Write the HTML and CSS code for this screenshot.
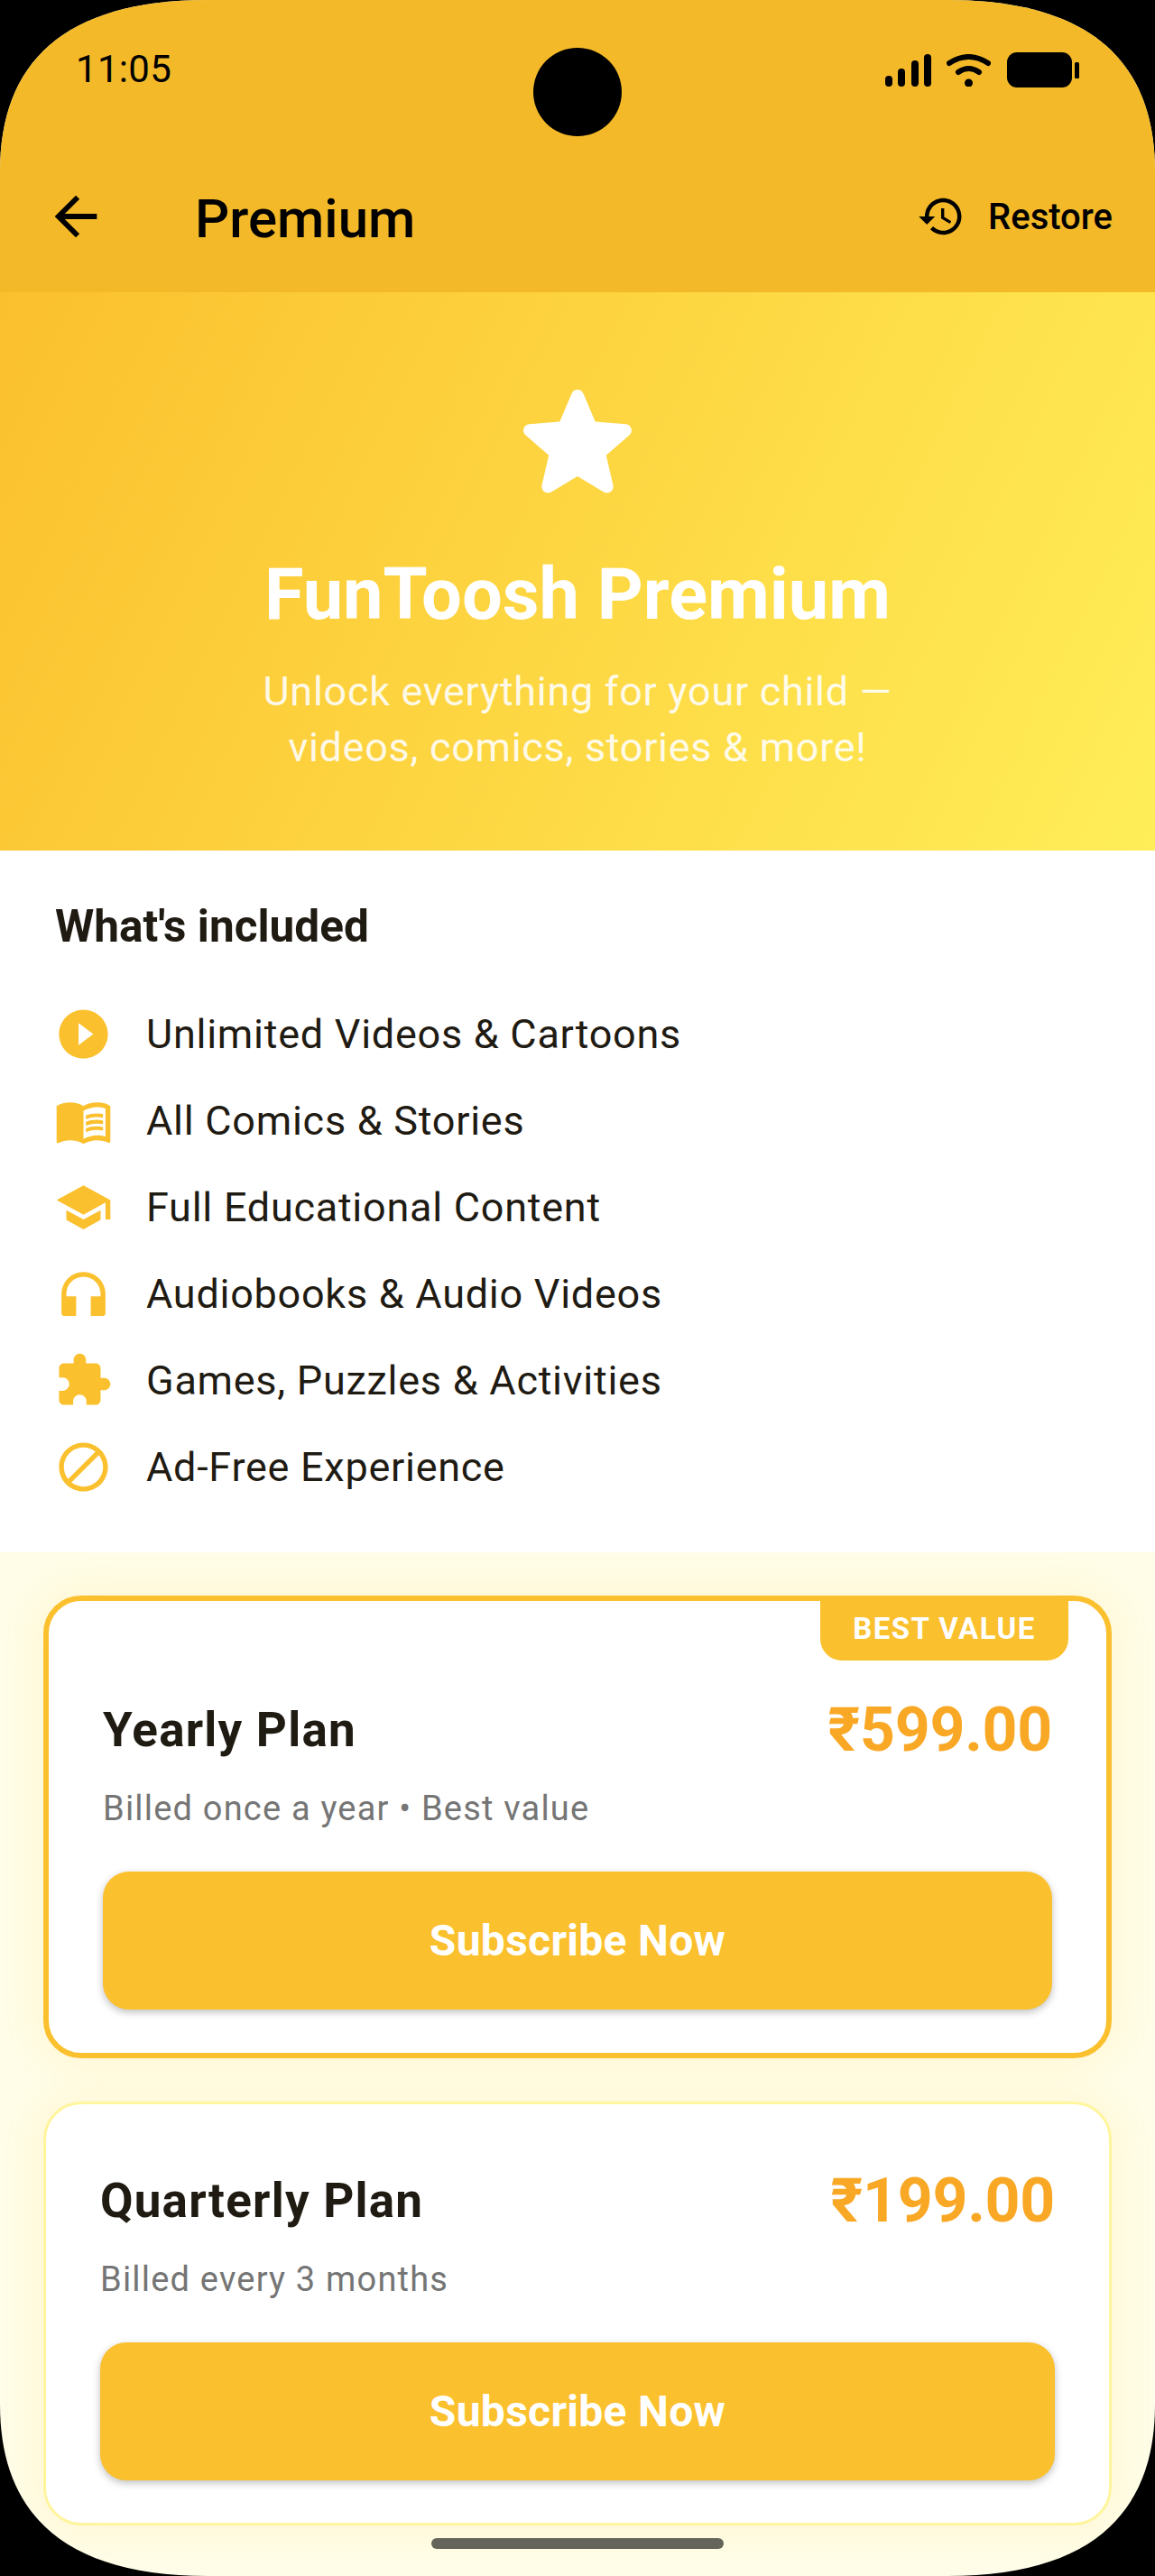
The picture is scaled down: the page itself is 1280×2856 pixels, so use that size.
FILE: index.html
```html
<!DOCTYPE html>
<html lang="en">
<head>
    <meta charset="UTF-8">
    <meta name="viewport" content="width=device-width, initial-scale=1.0">
    <title>FunToosh Premium</title>
    <link rel="stylesheet" href="styles.css">
</head>
<body>
    <div class="screen">
        <!-- Status bar and toolbar -->
        <header class="app-bar">
            <div class="status-bar">
                <span class="status-time">11:05</span>
                <div class="status-icons">
                    <svg class="icon-signal" viewBox="0 0 51 36">
                        <rect x="0" y="24" width="8" height="12" rx="4"/>
                        <rect x="14" y="16" width="8" height="20" rx="4"/>
                        <rect x="29" y="7" width="8" height="29" rx="4"/>
                        <rect x="43" y="0" width="8" height="36" rx="4"/>
                    </svg>
                    <svg class="icon-wifi" viewBox="0 0 49 36">
                        <path d="M3 10Q24.5 -4 46 10M13 20Q24.5 12 36 20" fill="none" stroke="#000" stroke-width="6" stroke-linecap="round"/>
                        <circle cx="24.5" cy="32" r="4.5"/>
                    </svg>
                    <svg class="icon-battery" viewBox="0 0 80 39">
                        <rect x="0" y="0" width="72" height="39" rx="11"/>
                        <rect x="75" y="11" width="5" height="18" rx="1.5"/>
                    </svg>
                </div>
            </div>
            <div class="toolbar">
                <svg class="icon-back" viewBox="0 0 24 24"><path d="M20 11H7.83l5.59-5.59L12 4l-8 8 8 8 1.41-1.41L7.83 13H20v-2z"/></svg>
                <h1 class="toolbar-title">Premium</h1>
                <div class="restore">
                    <svg class="icon-restore" viewBox="0 0 24 24"><path d="M13 3c-4.97 0-9 4.03-9 9H1l3.89 3.89.07.14L9 12H6c0-3.87 3.13-7 7-7s7 3.13 7 7-3.13 7-7 7c-1.93 0-3.68-.79-4.94-2.06l-1.42 1.42C8.27 19.99 10.51 21 13 21c4.97 0 9-4.03 9-9s-4.03-9-9-9zm-1 5v5l4.28 2.54.72-1.21-3.5-2.08V8H12z"/></svg>
                    <span>Restore</span>
                </div>
            </div>
        </header>

        <!-- Hero -->
        <section class="hero">
            <svg class="hero-star" viewBox="0 0 24 24"><path d="M12 17.27l4.15 2.51c.76.46 1.69-.22 1.49-1.08l-1.1-4.72 3.67-3.18c.67-.58.31-1.68-.57-1.75l-4.83-.41-1.89-4.46c-.34-.81-1.5-.81-1.84 0L9.19 8.63l-4.83.41c-.88.07-1.24 1.17-.57 1.75l3.67 3.18-1.1 4.72c-.2.86.73 1.54 1.49 1.08l4.15-2.5z"/></svg>
            <h2 class="hero-title">FunToosh Premium</h2>
            <p class="hero-text">Unlock everything for your child —<br>videos, comics, stories &amp; more!</p>
        </section>

        <!-- Features -->
        <section class="included">
            <h3 class="included-title">What's included</h3>
            <ul class="feature-list">
                <li class="feature">
                    <svg class="feature-icon" viewBox="0 0 24 24"><path d="M12 2C6.48 2 2 6.48 2 12s4.48 10 10 10 10-4.48 10-10S17.52 2 12 2zm-2 14.5v-9l6 4.5-6 4.5z"/></svg>
                    <span>Unlimited Videos &amp; Cartoons</span>
                </li>
                <li class="feature">
                    <svg class="feature-icon" viewBox="0 0 24 24"><path d="M21 5c-1.11-.35-2.33-.5-3.5-.5-1.95 0-4.05.4-5.5 1.5-1.45-1.1-3.55-1.5-5.5-1.5S2.45 4.9 1 6v14.65c0 .25.25.5.5.5.1 0 .15-.05.25-.05C3.1 20.45 5.05 20 6.5 20c1.95 0 4.05.4 5.5 1.5 1.35-.85 3.8-1.5 5.5-1.5 1.65 0 3.35.3 4.75 1.05.1.05.15.05.25.05.25 0 .5-.25.5-.5V6c-.6-.45-1.25-.75-2-1zm0 13.5c-1.1-.35-2.3-.5-3.5-.5-1.7 0-4.15.65-5.5 1.5V8c1.35-.85 3.8-1.5 5.5-1.5 1.2 0 2.4.15 3.5.5v11.5z"/><path d="M17.5 10.5c.88 0 1.73.09 2.5.26V9.24c-.79-.15-1.64-.24-2.5-.24-1.7 0-3.24.29-4.5.83v1.66c1.13-.64 2.7-.99 4.5-.99zM13 12.49v1.66c1.13-.64 2.7-.99 4.5-.99.88 0 1.73.09 2.5.26V11.9c-.79-.15-1.64-.24-2.5-.24-1.7 0-3.24.3-4.5.83zM17.5 14.33c-1.7 0-3.24.29-4.5.83v1.66c1.13-.64 2.7-.99 4.5-.99.88 0 1.73.09 2.5.26v-1.52c-.79-.16-1.64-.24-2.5-.24z"/></svg>
                    <span>All Comics &amp; Stories</span>
                </li>
                <li class="feature">
                    <svg class="feature-icon" viewBox="0 0 24 24"><path d="M5 13.18v4L12 21l7-3.82v-4L12 17l-7-3.82zM12 3L1 9l11 6 9-4.91V17h2V9L12 3z"/></svg>
                    <span>Full Educational Content</span>
                </li>
                <li class="feature">
                    <svg class="feature-icon" viewBox="0 0 24 24"><path d="M12 3a9 9 0 0 0-9 9v8c0 .55.45 1 1 1h5v-8H5v-1c0-3.87 3.13-7 7-7s7 3.13 7 7v1h-4v8h5c.55 0 1-.45 1-1v-8a9 9 0 0 0-9-9z"/></svg>
                    <span>Audiobooks &amp; Audio Videos</span>
                </li>
                <li class="feature">
                    <svg class="feature-icon" viewBox="0 0 24 24"><path d="M20.5 11H19V7c0-1.1-.9-2-2-2h-4V3.5C13 2.12 11.88 1 10.5 1S8 2.12 8 3.5V5H4c-1.1 0-1.99.9-1.99 2v3.8H3.5c1.49 0 2.7 1.21 2.7 2.7s-1.21 2.7-2.7 2.7H2V20c0 1.1.9 2 2 2h3.8v-1.5c0-1.49 1.21-2.7 2.7-2.7 1.49 0 2.7 1.21 2.7 2.7V22H17c1.1 0 2-.9 2-2v-4h1.5c1.38 0 2.5-1.12 2.5-2.5S21.88 11 20.5 11z"/></svg>
                    <span>Games, Puzzles &amp; Activities</span>
                </li>
                <li class="feature">
                    <svg class="feature-icon" viewBox="0 0 24 24"><path d="M12 2C6.48 2 2 6.48 2 12s4.48 10 10 10 10-4.48 10-10S17.52 2 12 2zM4 12c0-4.42 3.58-8 8-8 1.85 0 3.55.63 4.9 1.69L5.69 16.9C4.63 15.55 4 13.85 4 12zm8 8c-1.85 0-3.55-.63-4.9-1.69L18.31 7.1C19.37 8.45 20 10.15 20 12c0 4.42-3.58 8-8 8z"/></svg>
                    <span>Ad-Free Experience</span>
                </li>
            </ul>
        </section>

        <!-- Plans -->
        <section class="plans">
            <div class="plan plan-best">
                <span class="plan-badge">BEST VALUE</span>
                <div class="plan-head">
                    <span class="plan-name">Yearly Plan</span>
                    <span class="plan-price">₹599.00</span>
                </div>
                <p class="plan-note">Billed once a year • Best value</p>
                <button class="plan-btn">Subscribe Now</button>
            </div>
            <div class="plan plan-plain">
                <div class="plan-head">
                    <span class="plan-name">Quarterly Plan</span>
                    <span class="plan-price">₹199.00</span>
                </div>
                <p class="plan-note">Billed every 3 months</p>
                <button class="plan-btn">Subscribe Now</button>
            </div>
        </section>

        <!-- Over the content -->
        <div class="camera"></div>
        <div class="home-bar"></div>
    </div>
</body>
</html>
```

FILE: styles.css
```css
* {
    box-sizing: border-box;
}

body {
    margin: 0;
    background: #000;
    font-family: Roboto, "Liberation Sans", sans-serif;
    color: #1f1b13;
}

h1, h2, h3, p, ul {
    margin: 0;
    padding: 0;
}

.screen {
    position: relative;
    width: 1280px;
    height: 2856px;
    overflow: hidden;
    background: #fffde7;
    clip-path: path("M0 190C0 70 70 0 230 0H1050C1210 0 1280 70 1280 190V2666C1280 2786 1210 2856 1050 2856H230C70 2856 0 2786 0 2666Z");
}

/* App bar */
.app-bar {
    height: 324px;
    background: #f3b928;
    color: #000;
}

.status-bar {
    height: 156px;
    display: flex;
    justify-content: space-between;
    padding: 54px 84px 0 84px;
}

.status-time {
    font-size: 42px;
    line-height: 46px;
    letter-spacing: 0.3px;
}

.status-icons {
    display: flex;
    align-items: flex-start;
    height: 39px;
}

.icon-signal {
    width: 51px;
    height: 36px;
    margin-top: 6px;
}

.icon-wifi {
    width: 49px;
    height: 36px;
    margin: 6px 18px 0 17px;
}

.icon-battery {
    width: 80px;
    height: 39px;
    margin-top: 4px;
}

.toolbar {
    display: flex;
    align-items: center;
    height: 168px;
    padding: 0 47px 0 49px;
}

.icon-back {
    width: 70px;
    height: 70px;
    flex: none;
}

.toolbar-title {
    flex: 1;
    margin-left: 97px;
    font-size: 60px;
    font-weight: 500;
    line-height: 68px;
    padding-top: 6px;
}

.restore {
    display: flex;
    align-items: center;
    gap: 25px;
    font-size: 40px;
    font-weight: 500;
}

.icon-restore {
    width: 54px;
    height: 54px;
}

/* Hero */
.hero {
    height: 619px;
    padding-top: 83px;
    display: flex;
    flex-direction: column;
    align-items: center;
    background: linear-gradient(115.8deg, #fbc02d, #ffee58);
    color: #fff;
}

.hero-star {
    width: 168px;
    height: 168px;
    fill: #fff;
    flex: none;
}

.hero-title {
    margin-top: 38px;
    font-size: 79.4px;
    font-weight: 700;
    line-height: 92px;
}

.hero-text {
    margin-top: 31px;
    font-size: 45px;
    line-height: 62px;
    letter-spacing: 0.7px;
    text-align: center;
    color: rgba(255, 255, 255, 0.9);
}

/* What's included */
.included {
    height: 778px;
    padding: 55px 60px 0;
    background: #fff;
}

.included-title {
    margin-left: 1px;
    font-size: 49.5px;
    font-weight: 700;
    line-height: 58px;
}

.feature-list {
    margin-top: 42px;
    list-style: none;
}

.feature {
    display: flex;
    align-items: center;
    gap: 37px;
    height: 96px;
    font-size: 45px;
    letter-spacing: 0.73px;
}

.feature span {
    padding-top: 1px;
}

.feature-icon {
    width: 65px;
    height: 65px;
    flex: none;
    fill: #fbc02d;
}

/* Plans */
.plans {
    display: flex;
    flex-direction: column;
    gap: 48px;
    padding: 48px;
}

.plan {
    position: relative;
    width: 1184px;
    background: #fff;
    border-radius: 42px;
    box-shadow: 0 0 48px rgba(251, 192, 45, 0.12);
}

.plan-best {
    height: 513px;
    padding: 103px 60px 0;
    border: 6px solid #fbc02d;
}

.plan-plain {
    height: 470px;
    padding: 67px 60px 0;
    border: 3px solid #fff59d;
}

.plan-badge {
    position: absolute;
    top: -6px;
    right: 42px;
    width: 275px;
    height: 72px;
    display: flex;
    align-items: center;
    justify-content: center;
    background: #fbc02d;
    border-radius: 0 0 24px 24px;
    color: #fff;
    font-size: 33px;
    font-weight: 700;
    letter-spacing: 1.45px;
}

.plan-head {
    display: flex;
    align-items: center;
    justify-content: space-between;
    height: 80px;
}

.plan-name {
    font-size: 53px;
    font-weight: 700;
    letter-spacing: 1.2px;
}

.plan-price {
    font-size: 68px;
    font-weight: 700;
    letter-spacing: -0.3px;
    color: #f9a825;
}

.plan-note {
    margin-top: 24px;
    font-size: 38px;
    line-height: 46px;
    letter-spacing: 1.2px;
    color: #757575;
}

.plan-btn {
    display: block;
    width: 100%;
    height: 153px;
    margin-top: 47px;
    border: 0;
    border-radius: 29px;
    background: #fbc02d;
    box-shadow: 0 3px 8px rgba(0, 0, 0, 0.25);
    color: #fff;
    font-family: inherit;
    font-size: 48px;
    font-weight: 700;
    letter-spacing: 0.3px;
}

/* Camera cutout and home indicator */
.camera {
    position: absolute;
    top: 53px;
    left: 591px;
    width: 98px;
    height: 98px;
    border-radius: 50%;
    background: #000;
}

.home-bar {
    position: absolute;
    top: 2814px;
    left: 478px;
    width: 324px;
    height: 12px;
    border-radius: 6px;
    background: #65645a;
}
```
